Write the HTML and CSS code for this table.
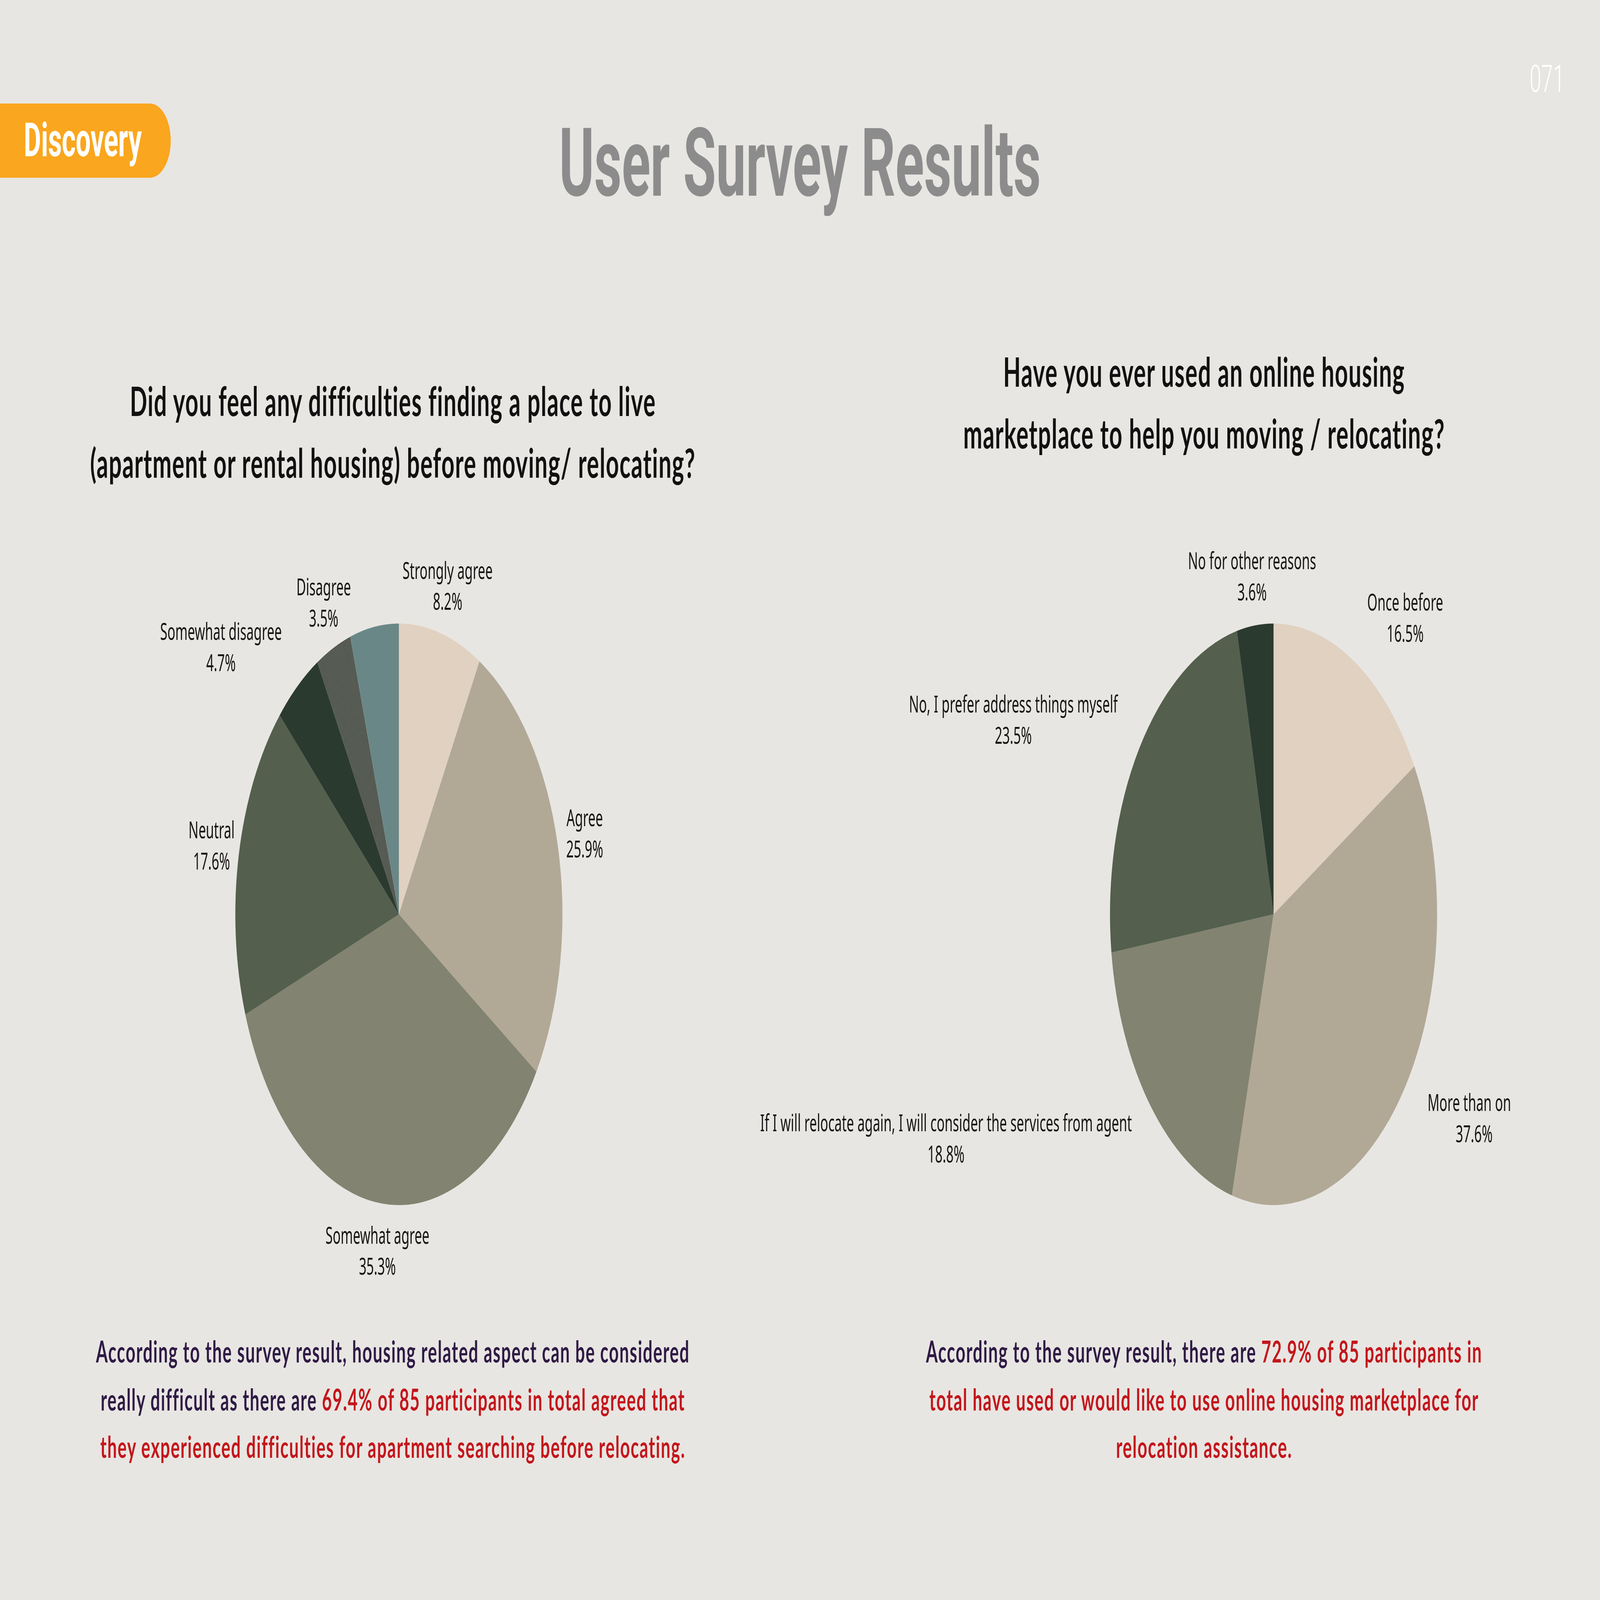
FILE: index.html
```html
<!DOCTYPE html>
<html lang="en">
<head>
<meta charset="utf-8">
<title>User Survey Results</title>
<link rel="stylesheet" href="styles.css">
</head>
<body>
<div class="slide">
  <header class="slide-header">
    <div class="badge">Discovery</div>
    <h1 class="title">User Survey Results</h1>
    <div class="page-num">071</div>
  </header>

  <main class="columns">
    <section class="col">
      <h2 class="question question--left">Did you feel any difficulties finding a place to live<br>(apartment or rental housing) before moving/ relocating?</h2>
      <svg class="chart" viewBox="0 0 3700 2184">
        <defs>
          <filter id="grain" x="0" y="0" width="100%" height="100%" color-interpolation-filters="sRGB">
            <feTurbulence type="fractalNoise" baseFrequency="0.7" numOctaves="1" seed="3" result="noise"/>
            <feColorMatrix in="noise" type="matrix" values="0.33 0.33 0.33 0 0  0.33 0.33 0.33 0 0  0.33 0.33 0.33 0 0  0 0 0 0 1" result="gray"/>
            <feComposite in="SourceGraphic" in2="gray" operator="arithmetic" k1="0" k2="1" k3="0.22" k4="-0.11" result="mix"/>
            <feComposite in="mix" in2="SourceGraphic" operator="in"/>
          </filter>
        </defs>
        <path class="s1" d="M1879 1068 L1879 283 A785 785 0 0 1 2265.8 384.9 Z"/>
        <path class="s2" d="M1879 1068 L2265.8 384.9 A785 785 0 0 1 2539.2 1492.8 Z"/>
        <path class="s3" d="M1879 1068 L2539.2 1492.8 A785 785 0 0 1 1142.0 1338.6 Z"/>
        <path class="s4" d="M1879 1068 L1142.0 1338.6 A785 785 0 0 1 1306.7 530.7 Z"/>
        <path class="s5" d="M1879 1068 L1306.7 530.7 A785 785 0 0 1 1487.9 387.3 Z"/>
        <path class="s6" d="M1879 1068 L1487.9 387.3 A785 785 0 0 1 1645.8 318.4 Z"/>
        <path class="s7" d="M1879 1068 L1645.8 318.4 A785 785 0 0 1 1879 283 Z"/>

        <text class="lbl" x="2113" y="162"><tspan x="2113">Strongly agree</tspan><tspan x="2113" dy="84">8.2%</tspan></text>
        <text class="lbl" x="1518" y="207"><tspan x="1518">Disagree</tspan><tspan x="1518" dy="84">3.5%</tspan></text>
        <text class="lbl" x="1025" y="327"><tspan x="1025">Somewhat disagree</tspan><tspan x="1025" dy="84">4.7%</tspan></text>
        <text class="lbl" x="980" y="863"><tspan x="980">Neutral</tspan><tspan x="980" dy="84">17.6%</tspan></text>
        <text class="lbl" x="2771" y="830"><tspan x="2771">Agree</tspan><tspan x="2771" dy="84">25.9%</tspan></text>
        <text class="lbl" x="1776" y="1957"><tspan x="1776">Somewhat agree</tspan><tspan x="1776" dy="84">35.3%</tspan></text>
      </svg>
      <p class="summary">According to the survey result, housing related aspect can be considered<br>really difficult as there are <span class="hl">69.4% of 85 participants in total agreed that</span><br><span class="hl">they experienced difficulties for apartment searching before relocating.</span></p>
    </section>

    <section class="col">
      <h2 class="question question--right">Have you ever used an online housing<br>marketplace to help you moving / relocating?</h2>
      <svg class="chart" viewBox="0 0 3700 2184">
        <path class="s1" d="M2183 1068 L2183 283 A785 785 0 0 1 2858.7 668.4 Z"/>
        <path class="s2" d="M2183 1068 L2858.7 668.4 A785 785 0 0 1 1983.0 1827.1 Z"/>
        <path class="s3" d="M2183 1068 L1983.0 1827.1 A785 785 0 0 1 1404.8 1171.3 Z"/>
        <path class="s4" d="M2183 1068 L1404.8 1171.3 A785 785 0 0 1 2006.9 303.0 Z"/>
        <path class="s5" d="M2183 1068 L2006.9 303.0 A785 785 0 0 1 2183 283 Z"/>

        <text class="lbl" x="2080" y="136"><tspan x="2080">No for other reasons</tspan><tspan x="2080" dy="84">3.6%</tspan></text>
        <text class="lbl" x="2815" y="248"><tspan x="2815">Once before</tspan><tspan x="2815" dy="84">16.5%</tspan></text>
        <text class="lbl" x="934" y="523"><tspan x="934">No, I prefer address things myself</tspan><tspan x="934" dy="84">23.5%</tspan></text>
        <text class="lbl" x="611" y="1654"><tspan x="611">If I will relocate again, I will consider the services from agent</tspan><tspan x="611" dy="84">18.8%</tspan></text>
        <text class="lbl lbl--start" x="2922" y="1599">More than on</text>
        <text class="lbl" x="3146" y="1683">37.6%</text>
      </svg>
      <p class="summary">According to the survey result, there are <span class="hl">72.9% of 85 participants in</span><br><span class="hl">total have used or would like to use online housing marketplace for</span><br><span class="hl">relocation assistance.</span></p>
    </section>
  </main>
</div>
<script src="fit.js"></script>
</body>
</html>
```

FILE: styles.css
```css
/* 1rem = 100 design pixels of the 7680 x 4320 slide */
html {
  font-size: calc(100vw / 76.8);
}

html, body {
  margin: 0;
  padding: 0;
}

body {
  background: #E8E6E2;
  width: 100vw;
  height: 100vh;
  overflow: hidden;
}

.slide {
  width: 76.8rem;
  height: 43.2rem;
  transform-origin: 0 0;
}

/* ---------- header ---------- */
.slide-header {
  display: grid;
  grid-template-columns: 1fr auto 1fr;
  align-items: start;
  height: 9rem;
}

.badge {
  justify-self: start;
  margin-top: 2.8rem;
  width: 8.2rem;
  height: 2rem;
  box-sizing: border-box;
  padding-left: 1.14rem;
  background: #FAA61E;
  border-radius: 0 1rem 1rem 0;
  color: #ffffff;
  font-family: Roboto, "Liberation Sans", sans-serif;
  font-weight: 700;
  font-size: 1.28rem;
  line-height: 2rem;
}

.title {
  margin: 2.9rem 0 0;
  font-family: Roboto, "Liberation Sans", sans-serif;
  font-weight: 700;
  font-size: 2.56rem;
  line-height: normal;
  color: #8C8C8C;
  white-space: nowrap;
}

.page-num {
  justify-self: end;
  margin-top: 1.54rem;
  margin-right: 1.7rem;
  font-family: Roboto, "Liberation Sans", sans-serif;
  font-weight: 300;
  font-size: 1.01rem;
  line-height: normal;
  color: #ffffff;
}

/* ---------- columns ---------- */
.columns {
  display: grid;
  grid-template-columns: 37rem 37rem;
  column-gap: 1.94rem;
  padding-left: 0.36rem;
}

.col {
  display: flex;
  flex-direction: column;
}

.question {
  margin: 0;
  height: 5rem;
  box-sizing: border-box;
  text-align: center;
  font-family: Lato, "Open Sans", sans-serif;
  font-weight: 700;
  font-size: 1.09rem;
  line-height: 1.68rem;
  letter-spacing: 0.03rem;
  color: #111111;
  white-space: nowrap;
}

.question--left {
  padding-top: 0.97rem;
}

.question--right {
  padding-top: 0.18rem;
}

.chart {
  display: block;
  width: 37rem;
  height: 21.84rem;
  overflow: visible;
}

.s1 { fill: #E0D1C1; }
.s2 { fill: #B1A996; }
.s3 { fill: #828370; }
.s4 { fill: #545F4E; }
.s5 { fill: #2B3A2F; }
.s6 { fill: #565B53; filter: url(#grain); }
.s7 { fill: #6A8787; }

.lbl {
  font-family: "Noto Sans", "Open Sans", sans-serif;
  font-size: 63px;
  fill: #151515;
  text-anchor: middle;
}

.lbl--start {
  text-anchor: start;
}

.summary {
  margin: 0;
  text-align: center;
  font-family: Lato, "Open Sans", sans-serif;
  font-weight: 700;
  font-size: 0.81rem;
  line-height: 1.28rem;
  letter-spacing: 0.036rem;
  color: #2F1A45;
  white-space: nowrap;
}

.hl {
  color: #C3161C;
}
```

FILE: fit.js
```js
// Stretch the 16:9 slide so that it fills whatever window it is shown in.
(function () {
  var slide = document.querySelector('.slide');
  function fit() {
    var k = (window.innerHeight / window.innerWidth) * (7680 / 4320);
    slide.style.transform = 'scaleY(' + k.toFixed(5) + ')';
  }
  fit();
  window.addEventListener('resize', fit);
})();
```
